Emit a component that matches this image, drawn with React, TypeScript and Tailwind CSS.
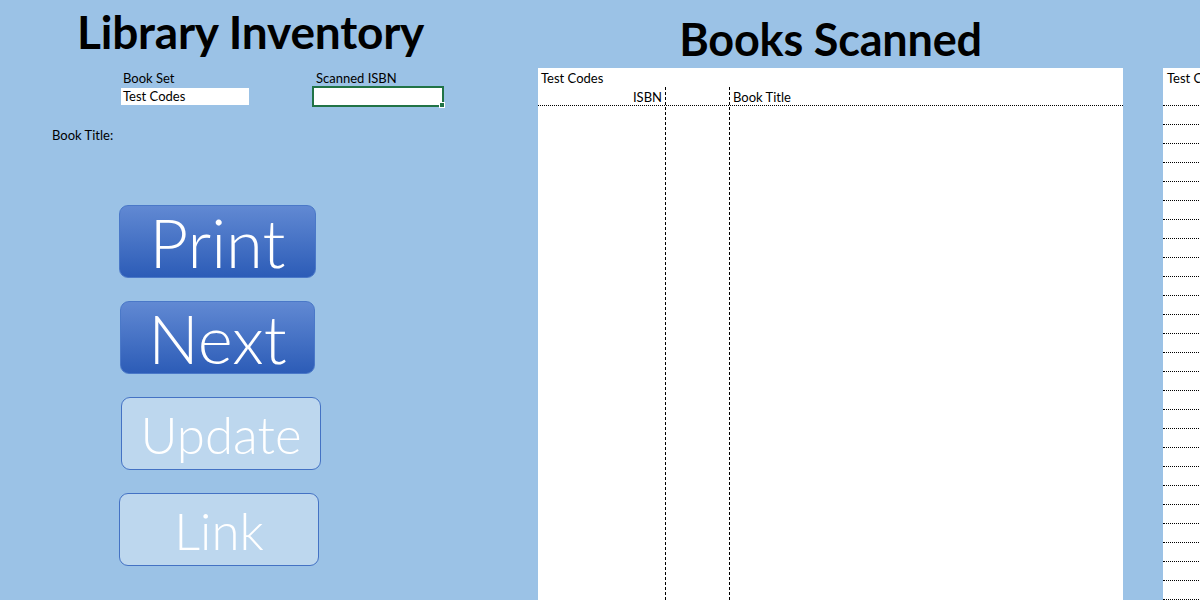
import React from "react";

const rows = Array.from({ length: 26 });

function BigButton({ label, dim, w, ml, size }: { label: string; dim?: boolean; w: string; ml: string; size: string }) {
  return (
    <div
      className={`${w} ${ml} h-[73px] rounded-[9px] border flex items-center justify-center text-white font-light leading-none ${size} ${
        dim
          ? "bg-[#bdd7ee] border-[#4472c4]"
          : "bg-gradient-to-b from-[#6189d3] to-[#2c5cb7] border-[#4a78c8]"
      }`}
    >
      <span className="mt-[3px]">{label}</span>
    </div>
  );
}

export default function App() {
  return (
    <div
      className="w-[1200px] h-[600px] overflow-hidden bg-[#9bc2e6] flex text-black"
      style={{ fontFamily: "Lato, 'Open Sans', sans-serif" }}
    >
      {/* left: form + buttons */}
      <div className="w-[538px] shrink-0 flex flex-col">
        <h1 className="ml-[77px] mt-[6px] text-[46px] font-bold leading-[52px] tracking-[-0.2px]">Library Inventory</h1>

        <div className="flex mt-[12px] text-[13px] leading-[17px]">
          <div className="ml-[121px] w-[128px]">
            <div className="pl-[2px]">Book Set</div>
            <div className="bg-white h-[17px] mt-[1px] pl-[2px]">Test Codes</div>
          </div>
          <div className="ml-[63px]">
            <div className="pl-[4px]">Scanned ISBN</div>
            <div className="relative w-[132px] h-[21px] border-2 border-[#217346] bg-white -mt-[1px]">
              <div className="absolute -right-[3px] -bottom-[3px] w-[6px] h-[6px] bg-[#217346] border border-white" />
            </div>
          </div>
        </div>

        <div className="ml-[52px] mt-[19px] text-[13px]">Book Title:</div>

        <div className="flex flex-col mt-[59px] gap-[23px]">
          <BigButton label="Print" w="w-[197px]" ml="ml-[119px]" size="text-[67px]" />
          <BigButton label="Next" w="w-[195px]" ml="ml-[120px]" size="text-[67px]" />
          <BigButton label="Update" dim w="w-[200px]" ml="ml-[121px]" size="text-[51px]" />
          <BigButton label="Link" dim w="w-[200px]" ml="ml-[119px]" size="text-[51px]" />
        </div>
      </div>

      {/* centre: scanned list */}
      <div className="w-[585px] shrink-0 flex flex-col">
        <h2 className="text-center text-[45px] font-bold leading-[52px] mt-[13px] h-[55px] tracking-[-0.2px]">Books Scanned</h2>
        <div className="flex-1 bg-white flex flex-col text-[13px]">
          <div className="h-[19px] pl-[3px] leading-[20px]">Test Codes</div>
          <div className="flex flex-1">
            <div className="w-[127px] flex flex-col">
              <div className="h-[19px] leading-[21px] text-right pr-[3px] border-b border-dotted border-black">ISBN</div>
            </div>
            <div className="w-px bg-[repeating-linear-gradient(to_bottom,#000_0_3px,transparent_3px_5px)]" />
            <div className="w-[63px] flex flex-col">
              <div className="h-[19px] border-b border-dotted border-black" />
            </div>
            <div className="w-px bg-[repeating-linear-gradient(to_bottom,#000_0_3px,transparent_3px_5px)]" />
            <div className="flex-1 flex flex-col">
              <div className="h-[19px] leading-[21px] pl-[3px] border-b border-dotted border-black">Book Title</div>
            </div>
          </div>
        </div>
      </div>

      {/* right: second sheet, cut off at the window edge */}
      <div className="ml-[40px] flex-1 flex flex-col pt-[68px]">
        <div className="flex-1 bg-white text-[13px]">
          <div className="h-[19px] leading-[20px] pl-[4px] whitespace-nowrap">Test Codes</div>
          <div className="h-[19px] border-b border-dotted border-black" />
          {rows.map((_, i) => (
            <div key={i} className="h-[19px] border-b border-dotted border-black" />
          ))}
        </div>
      </div>
    </div>
  );
}
